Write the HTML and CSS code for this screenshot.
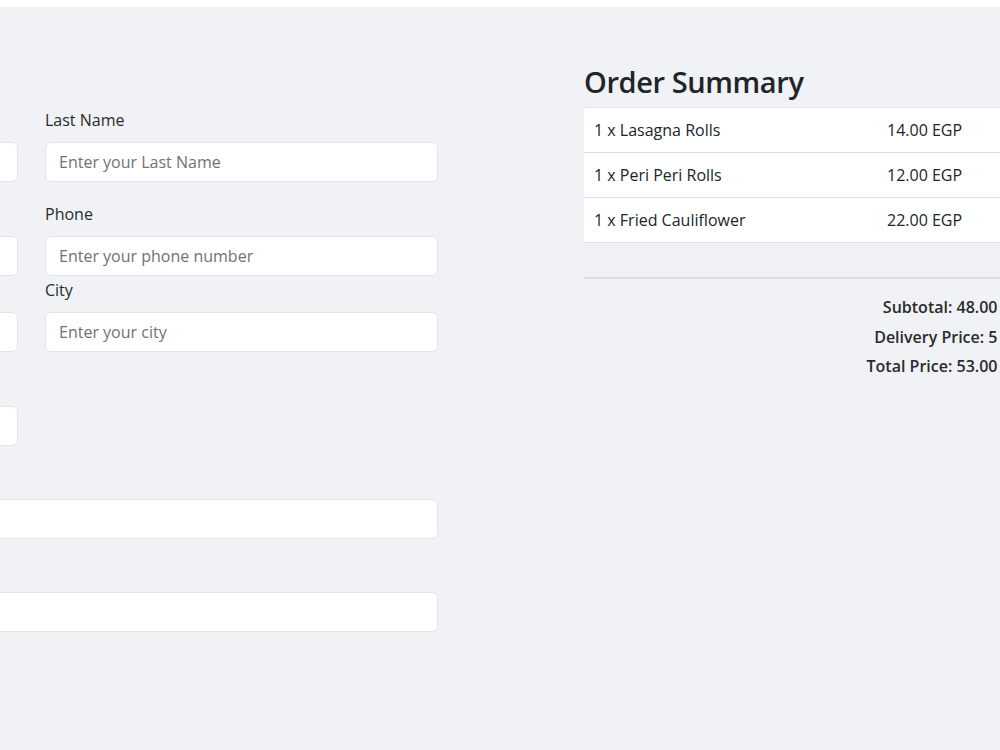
FILE: index.html
```html
<!DOCTYPE html>
<html lang="en">
<head>
  <meta charset="UTF-8" />
  <meta name="viewport" content="width=device-width, initial-scale=1.0"/>
  <title>Checkout</title>
  <link rel="stylesheet" href="styles.css">
</head>
<body>
  <div class="topbar"></div>

  <div class="checkout">
    <div class="form-col">
      <h2 class="section-title">Billing Details</h2>
      <form class="form-grid">
        <div class="field">
          <label>First Name</label>
          <input type="text" placeholder="Enter your First Name" />
        </div>
        <div class="field">
          <label>Last Name</label>
          <input type="text" placeholder="Enter your Last Name" />
        </div>

        <div class="field tight">
          <label>Email</label>
          <input type="email" placeholder="Enter your email" />
        </div>
        <div class="field tight">
          <label>Phone</label>
          <input type="text" placeholder="Enter your phone number" />
        </div>

        <div class="field">
          <label>Area</label>
          <input type="text" placeholder="Enter your area" />
        </div>
        <div class="field">
          <label>City</label>
          <input type="text" placeholder="Enter your city" />
        </div>

        <div class="field snug">
          <label>Building</label>
          <input type="text" />
        </div>
        <div class="field snug"></div>

        <div class="field wide snug">
          <label>Address</label>
          <input type="text" />
        </div>
        <div class="field wide">
          <label>Notes</label>
          <input type="text" />
        </div>
      </form>
    </div>

    <div class="summary-col">
      <h2 class="section-title">Order Summary</h2>
      <table class="order-table">
        <colgroup>
          <col class="item-col">
          <col>
        </colgroup>
        <tr>
          <td>1 x Lasagna Rolls</td>
          <td>14.00 EGP</td>
        </tr>
        <tr>
          <td>1 x Peri Peri Rolls</td>
          <td>12.00 EGP</td>
        </tr>
        <tr>
          <td>1 x Fried Cauliflower</td>
          <td>22.00 EGP</td>
        </tr>
      </table>

      <hr class="divider">

      <div class="totals">
        <p>Subtotal: 48.00 EGP</p>
        <p>Delivery Price: 5 EGP</p>
        <p>Total Price: 53.00 EGP</p>
      </div>
    </div>
  </div>
</body>
</html>
```

FILE: styles.css
```css
body {
  margin: 0;
  font-family: "Open Sans", "Noto Sans", sans-serif;
  font-size: 16px;
  line-height: 24px;
  color: #212529;
  background-color: #f0f2f5;
  overflow: hidden;
}

.topbar {
  height: 7px;
  background-color: white;
}

.checkout {
  display: flex;
  gap: 146px;
  width: 1420px;
  margin-left: -375px;
  padding-top: 57px;
}

.form-col {
  width: 813px;
}

.summary-col {
  width: 448px;
}

.section-title {
  font-size: 29px;
  font-weight: 600;
  letter-spacing: -0.4px;
  line-height: 36px;
  margin: 0 0 7px;
  color: #212529;
}

.form-col .section-title {
  margin-bottom: 8px;
}

.form-grid {
  display: grid;
  grid-template-columns: 393px 393px;
  column-gap: 27px;
}

.field {
  margin-bottom: 20px;
}

.field.tight {
  margin-bottom: 2px;
}

.field.snug {
  margin-bottom: 19px;
}

.field.wide {
  grid-column: 1 / -1;
}

label {
  display: block;
  margin-bottom: 10px;
  color: #2b2b2b;
}

input {
  display: block;
  width: 100%;
  height: 40px;
  box-sizing: border-box;
  padding: 7px 13px;
  font-family: inherit;
  font-size: 16px;
  color: #212529;
  background-color: white;
  border: 1px solid #e2e4e8;
  border-radius: 6px;
}

input::placeholder {
  color: #707275;
}

.order-table {
  width: 100%;
  border-collapse: collapse;
  table-layout: fixed;
  background-color: white;
}

.item-col {
  width: 293px;
}

.order-table td {
  padding: 10px 10px;
  border-top: 1px solid #e4e5e8;
  border-bottom: 1px solid #dee0e3;
}

.divider {
  margin: 34px 0 16px;
  border: none;
  border-top: 2px solid #dcdde1;
}

.totals {
  text-align: right;
  font-weight: 600;
  color: #2b2b2b;
}

.totals p {
  margin: 0 0 5.5px;
}
```
